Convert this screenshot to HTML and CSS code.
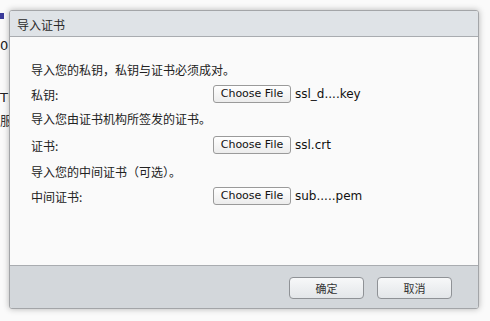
FILE: index.html
```html
<!DOCTYPE html>
<html>
<head>
<meta charset="utf-8">
<link rel="stylesheet" href="styles.css">
</head>
<body>
<div class="page">
  <div class="bg-mark"></div>
  <div class="bg-line bg-0">0</div>
  <div class="bg-line bg-tr">TF</div>
  <div class="bg-line bg-fu">服</div>
</div>
<div class="dialog">
  <div class="dlg-head">导入证书</div>
  <div class="dlg-body">
    <div class="note n1">导入您的私钥，私钥与证书必须成对。</div>
    <div class="row r1">
      <span class="label">私钥:</span>
      <span class="file"><span class="btn-file">Choose File</span><span class="fname">ssl_d....key</span></span>
    </div>
    <div class="note n2">导入您由证书机构所签发的证书。</div>
    <div class="row r2">
      <span class="label">证书:</span>
      <span class="file"><span class="btn-file">Choose File</span><span class="fname">ssl.crt</span></span>
    </div>
    <div class="note n3">导入您的中间证书（可选）。</div>
    <div class="row r3">
      <span class="label">中间证书:</span>
      <span class="file"><span class="btn-file">Choose File</span><span class="fname">sub.....pem</span></span>
    </div>
  </div>
  <div class="dlg-foot">
    <span class="btn">确定</span>
    <span class="btn">取消</span>
  </div>
</div>
</body>
</html>
```
FILE: styles.css
```css
html, body {
  margin: 0;
  padding: 0;
}
body {
  width: 490px;
  height: 321px;
  background: #fafafa;
  font-family: "Noto Sans CJK SC", "DejaVu Sans", sans-serif;
  position: relative;
  overflow: hidden;
}
.page {
  padding-top: 13px;
  font-size: 13px;
  color: #222;
}
.bg-mark {
  width: 4px;
  height: 6px;
  background: #3b3b9a;
}
.bg-line {
  font-family: "DejaVu Sans", sans-serif;
  line-height: 16px;
}
.bg-0 { margin-top: 19px; }
.bg-tr { margin-top: 36px; }
.bg-fu { margin-top: 6px; font-family: "Noto Sans CJK SC", sans-serif; color: #333; }

.dialog {
  position: absolute;
  left: 9px;
  top: 10px;
  width: 468px;
  height: 297px;
  border: 1px solid #a3a5a8;
  border-radius: 3px;
  background: #fafafa;
  box-shadow: 0 0 6px rgba(0,0,0,0.28);
  display: flex;
  flex-direction: column;
  overflow: hidden;
}
.dlg-head {
  height: 25px;
  line-height: 27px;
  background: #dfe3e7;
  border-bottom: 1px solid #a9acb0;
  padding-left: 7px;
  font-size: 12px;
  color: #2a2a2a;
}
.dlg-body {
  flex: 1;
  padding: 0 0 0 21px;
  font-size: 12px;
  color: #222;
}
.note {
  height: 20px;
  line-height: 20px;
}
.n1 { margin-top: 23px; }
.r1 { margin-top: 3px; }
.n2 { margin-top: 4px; }
.r2 { margin-top: 5px; }
.n3 { margin-top: 6px; }
.r3 { margin-top: 3px; }
.row {
  display: flex;
  align-items: center;
  height: 22px;
}
.label {
  width: 182px;
}
.file {
  display: flex;
  align-items: center;
}
.btn-file {
  display: inline-block;
  box-sizing: border-box;
  width: 78px;
  height: 18px;
  line-height: 16px;
  border: 1px solid #9a9a9a;
  border-radius: 3px;
  background: linear-gradient(#ffffff, #ececec);
  font-family: "DejaVu Sans", sans-serif;
  font-size: 11px;
  text-align: center;
  color: #111;
}
.fname {
  margin-left: 4px;
  font-family: "DejaVu Sans", sans-serif;
  font-size: 12px;
  color: #111;
}
.dlg-foot {
  height: 43px;
  border-top: 1px solid #a9acb0;
  background: #d3d7db;
  display: flex;
  justify-content: flex-end;
  align-items: flex-start;
  gap: 13px;
  padding: 11px 26px 0 0;
  box-sizing: border-box;
}
.btn {
  box-sizing: border-box;
  width: 75px;
  height: 22px;
  line-height: 20px;
  border: 1px solid #8f9296;
  border-radius: 4px;
  background: linear-gradient(#f7f8f9, #e3e6e9);
  font-size: 11px;
  text-align: center;
  color: #333;
}
```
